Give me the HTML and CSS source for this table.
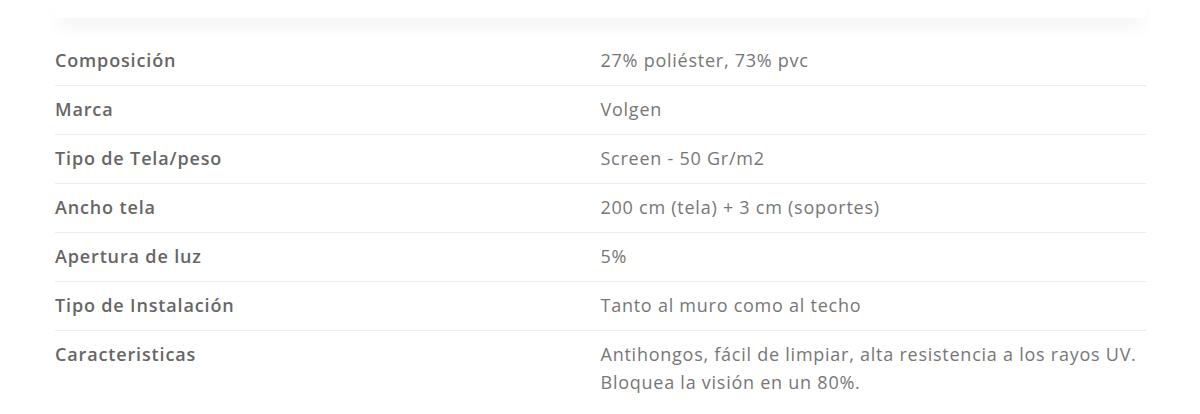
FILE: index.html
```html
<!DOCTYPE html>
<html lang="es">
<head>
<meta charset="utf-8">
<link rel="stylesheet" href="styles.css">
</head>
<body>
<div class="page">
  <div class="shadow-bar"></div>
  <table class="specs">
    <tbody>
      <tr><th>Composición</th><td>27% poliéster, 73% pvc</td></tr>
      <tr><th>Marca</th><td>Volgen</td></tr>
      <tr><th>Tipo de Tela/peso</th><td>Screen - 50 Gr/m2</td></tr>
      <tr><th>Ancho tela</th><td>200 cm (tela) + 3 cm (soportes)</td></tr>
      <tr><th>Apertura de luz</th><td>5%</td></tr>
      <tr><th>Tipo de Instalación</th><td>Tanto al muro como al techo</td></tr>
      <tr><th>Caracteristicas</th><td>Antihongos, fácil de limpiar, alta resistencia a los rayos UV.<br>Bloquea la visión en un 80%.</td></tr>
    </tbody>
  </table>
</div>
</body>
</html>
```

FILE: styles.css
```css
html, body {
  margin: 0;
  padding: 0;
  background: #fff;
}
.page {
  width: 1091px;
  margin: 0 0 0 55px;
  font-family: "Open Sans", "Noto Sans", sans-serif;
}
.shadow-bar {
  height: 18px;
  background: #fff;
  box-shadow: 0 10px 18px -4px rgba(0, 0, 0, 0.08);
  position: relative;
  z-index: 1;
}
.specs {
  width: 100%;
  border-collapse: collapse;
  margin-top: 19px;
  table-layout: fixed;
}
.specs th,
.specs td {
  width: 50%;
  padding: 9px 0 11px;
  line-height: 28px;
  font-size: 18px;
  letter-spacing: 0.75px;
  text-align: left;
  vertical-align: top;
  border-bottom: 1px solid #ececec;
}
.specs th {
  font-weight: 600;
  letter-spacing: 0.85px;
  color: #666;
}
.specs td {
  font-weight: 400;
  color: #777;
}
.specs tr:last-child th,
.specs tr:last-child td {
  border-bottom: none;
}
```
